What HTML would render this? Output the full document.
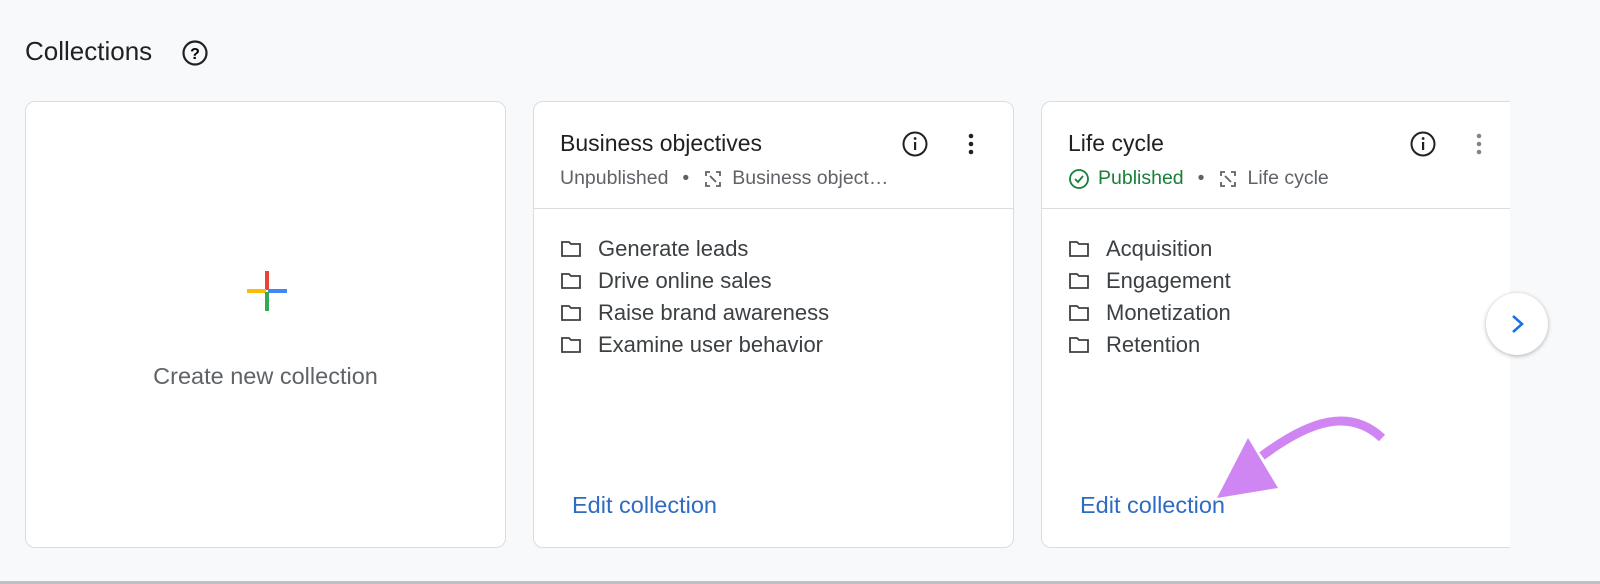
<!DOCTYPE html>
<html><head><style>
body{margin:0;width:1600px;height:584px;background:#f8f9fb;font-family:"Liberation Sans",sans-serif;position:relative;overflow:hidden;color:#202124}
.t{position:absolute;left:25px;top:36px;font-size:26px;color:#202124}
.card{position:absolute;top:101px;height:447px;background:#fff;border:1px solid #dadce0;border-radius:10px;box-sizing:border-box;overflow:hidden}
.h{font-size:23px;position:absolute;left:26px;top:28px;color:#202124}
.sub{position:absolute;left:26px;top:65px;font-size:19.5px;color:#5f6368;white-space:nowrap;display:flex;align-items:center}
.sep{position:absolute;left:0;right:0;top:106px;border-top:1px solid #dadce0}
.list{position:absolute;left:26px;top:131px;font-size:22px;line-height:32px;color:#3c4043}
.list div{display:flex;align-items:center}
.list svg{margin-right:16px}
.edit{position:absolute;left:38px;top:390px;font-size:23.5px;color:#2f6bc2}
</style></head><body>
<div class="t">Collections</div>
<svg style="position:absolute;left:181px;top:39px" width="28" height="28" viewBox="0 0 28 28"><circle cx="14" cy="14" r="11.5" fill="none" stroke="#202124" stroke-width="2.2"/><text x="14" y="20" text-anchor="middle" font-size="16" font-weight="bold" font-family="Liberation Sans">?</text></svg>

<div class="card" style="left:25px;width:481px">
<svg style="position:absolute;left:221px;top:169px" width="40" height="40" viewBox="0 0 40 40"><rect x="18" y="0" width="4" height="19" fill="#ea4335"/><rect x="0" y="18" width="19" height="4" fill="#fbbc04"/><rect x="21" y="18" width="19" height="4" fill="#4285f4"/><rect x="18" y="21" width="4" height="19" fill="#34a853"/></svg>
<div style="position:absolute;left:0;right:0;top:261px;text-align:center;font-size:23.5px;color:#5f6368">Create new collection</div>
</div>

<div class="card" style="left:533px;width:481px">
<div class="h">Business objectives</div>
<svg style="position:absolute;left:367px;top:28px" width="28" height="28"><circle cx="14" cy="14" r="11.5" fill="none" stroke="#202124" stroke-width="2"/><rect x="13" y="12" width="2.2" height="8" fill="#202124"/><circle cx="14.1" cy="8.5" r="1.4" fill="#202124"/></svg>
<svg style="position:absolute;left:430px;top:30px" width="14" height="24"><circle cx="7" cy="4" r="2.3" fill="#202124"/><circle cx="7" cy="12" r="2.3" fill="#202124"/><circle cx="7" cy="20" r="2.3" fill="#202124"/></svg>
<div class="sub">Unpublished<span style="margin:0 14px">•</span><svg width="20" height="20" style="margin-right:9px"><path d="M3 7V3h4M13 3h4v4M17 13v4h-4M7 17H3v-4M7 7l6 6" fill="none" stroke="#5f6368" stroke-width="1.8"/></svg>Business object…</div>
<div class="sep"></div>
<div class="list">
<div><svg width="22" height="18"><path d="M2 2h7l2 2h9v12H2z" fill="none" stroke="#3c4043" stroke-width="1.8"/></svg>Generate leads</div>
<div><svg width="22" height="18"><path d="M2 2h7l2 2h9v12H2z" fill="none" stroke="#3c4043" stroke-width="1.8"/></svg>Drive online sales</div>
<div><svg width="22" height="18"><path d="M2 2h7l2 2h9v12H2z" fill="none" stroke="#3c4043" stroke-width="1.8"/></svg>Raise brand awareness</div>
<div><svg width="22" height="18"><path d="M2 2h7l2 2h9v12H2z" fill="none" stroke="#3c4043" stroke-width="1.8"/></svg>Examine user behavior</div>
</div>
<div class="edit">Edit collection</div>
</div>

<div class="card" style="left:1041px;width:520px;border-right:none;border-radius:10px 0 0 10px">
<div class="h">Life cycle</div>
<svg style="position:absolute;left:367px;top:28px" width="28" height="28"><circle cx="14" cy="14" r="11.5" fill="none" stroke="#202124" stroke-width="2"/><rect x="13" y="12" width="2.2" height="8" fill="#202124"/><circle cx="14.1" cy="8.5" r="1.4" fill="#202124"/></svg>
<svg style="position:absolute;left:430px;top:30px" width="14" height="24"><circle cx="7" cy="4" r="2.3" fill="#80868b"/><circle cx="7" cy="12" r="2.3" fill="#80868b"/><circle cx="7" cy="20" r="2.3" fill="#80868b"/></svg>
<div class="sub"><svg width="22" height="22" style="margin-right:8px"><circle cx="11" cy="11" r="9" fill="none" stroke="#188038" stroke-width="1.8"/><path d="M7 11l3 3 5-6" fill="none" stroke="#188038" stroke-width="1.8"/></svg><span style="color:#188038">Published</span><span style="margin:0 14px">•</span><svg width="20" height="20" style="margin-right:9px"><path d="M3 7V3h4M13 3h4v4M17 13v4h-4M7 17H3v-4M7 7l6 6" fill="none" stroke="#5f6368" stroke-width="1.8"/></svg>Life cycle</div>
<div class="sep"></div>
<div class="list">
<div><svg width="22" height="18"><path d="M2 2h7l2 2h9v12H2z" fill="none" stroke="#3c4043" stroke-width="1.8"/></svg>Acquisition</div>
<div><svg width="22" height="18"><path d="M2 2h7l2 2h9v12H2z" fill="none" stroke="#3c4043" stroke-width="1.8"/></svg>Engagement</div>
<div><svg width="22" height="18"><path d="M2 2h7l2 2h9v12H2z" fill="none" stroke="#3c4043" stroke-width="1.8"/></svg>Monetization</div>
<div><svg width="22" height="18"><path d="M2 2h7l2 2h9v12H2z" fill="none" stroke="#3c4043" stroke-width="1.8"/></svg>Retention</div>
</div>
<div class="edit">Edit collection</div>
</div>
<div style="position:absolute;left:1510px;top:95px;width:90px;height:460px;background:#f8f9fb"></div>
<div style="position:absolute;left:1486px;top:293px;width:62px;height:62px;border-radius:50%;background:#fff;box-shadow:0 1px 4px rgba(0,0,0,.3)"></div>
<svg style="position:absolute;left:1506px;top:313px" width="22" height="22"><path d="M7 3l9 8-9 8" fill="none" stroke="#1a73e8" stroke-width="2.6"/></svg>
<svg style="position:absolute;left:1200px;top:410px" width="200" height="110"><path d="M182 28C150 -2 110 10 62 46" fill="none" stroke="#cf86f2" stroke-width="9"/><path d="M48 28L17 88 78 78z" fill="#cf86f2"/></svg>
<div style="position:absolute;left:0;right:0;top:581px;height:3px;background:#bdc1c6"></div>
</body></html>
